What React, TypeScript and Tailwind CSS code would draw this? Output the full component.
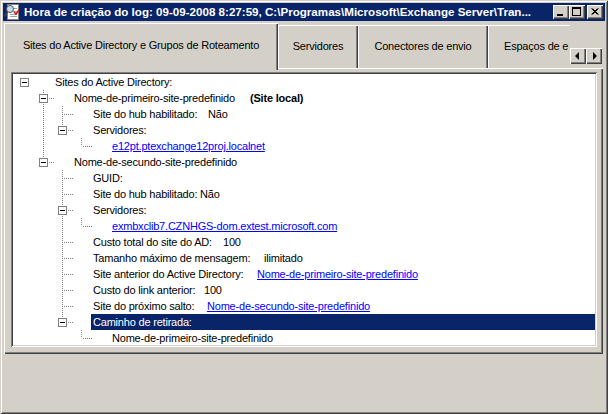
import React from 'react';

type Row = {
  depth: number;
  label: string;
  link?: boolean;
  lw?: string;
  value?: string;
  valueKind?: 'link' | 'bold' | 'text';
  selected?: boolean;
};

const TITLE =
  'Hora de criação do log: 09-09-2008 8:27:59, C:\\Programas\\Microsoft\\Exchange Server\\Tran...';

const rows: Row[] = [
  { depth: 0, label: 'Sites do Active Directory:' },
  { depth: 1, label: 'Nome-de-primeiro-site-predefinido', lw: 'w-[176px]', value: '(Site local)', valueKind: 'bold' },
  { depth: 2, label: 'Site do hub habilitado:', lw: 'w-[115px]', value: 'Não' },
  { depth: 2, label: 'Servidores:' },
  { depth: 3, label: 'e12pt.ptexchange12proj.localnet', link: true },
  { depth: 1, label: 'Nome-de-secundo-site-predefinido' },
  { depth: 2, label: 'GUID:' },
  { depth: 2, label: 'Site do hub habilitado: Não' },
  { depth: 2, label: 'Servidores:' },
  { depth: 3, label: 'exmbxclib7.CZNHGS-dom.extest.microsoft.com', link: true },
  { depth: 2, label: 'Custo total do site do AD:', lw: 'w-[130px]', value: '100' },
  { depth: 2, label: 'Tamanho máximo de mensagem:', lw: 'w-[171px]', value: 'ilimitado' },
  { depth: 2, label: 'Site anterior do Active Directory:', lw: 'w-[164px]', value: 'Nome-de-primeiro-site-predefinido', valueKind: 'link' },
  { depth: 2, label: 'Custo do link anterior:', lw: 'w-[111px]', value: '100' },
  { depth: 2, label: 'Site do próximo salto:', lw: 'w-[114px]', value: 'Nome-de-secundo-site-predefinido', valueKind: 'link' },
  { depth: 2, label: 'Caminho de retirada:', selected: true },
  { depth: 3, label: 'Nome-de-primeiro-site-predefinido' },
];

const hasNext = (i: number) => {
  const d = rows[i].depth;
  for (let j = i + 1; j < rows.length; j++) {
    if (rows[j].depth < d) return false;
    if (rows[j].depth === d) return true;
  }
  return false;
};

const hasChildren = (i: number) => i + 1 < rows.length && rows[i + 1].depth > rows[i].depth;

const ancestorAt = (i: number, level: number) => {
  for (let j = i - 1; j >= 0; j--) if (rows[j].depth === level) return j;
  return -1;
};

function TreeLines({ index }: { index: number }) {
  const d = rows[index].depth;
  const col = (c: number) => 9.5 + 19 * c;
  const dots = { stroke: '#808080', strokeWidth: 1, strokeDasharray: '1 1' };
  const parts: React.ReactNode[] = [];

  for (let a = 1; a < d; a++) {
    const anc = ancestorAt(index, a);
    if (anc >= 0 && hasNext(anc)) {
      parts.push(<line key={'a' + a} x1={col(a)} y1={0} x2={col(a)} y2={16} {...dots} />);
    }
  }
  if (d >= 1) {
    parts.push(<line key="top" x1={col(d)} y1={0} x2={col(d)} y2={8} {...dots} />);
    if (hasNext(index)) parts.push(<line key="bot" x1={col(d)} y1={8} x2={col(d)} y2={16} {...dots} />);
    parts.push(<line key="h" x1={9 + 19 * d + 2} y1={8.5} x2={9 + 19 * d + 12} y2={8.5} {...dots} />);
  }
  if (hasChildren(index)) {
    parts.push(
      <g key="box">
        <rect x={5.5 + 19 * d} y={4.5} width={8} height={8} fill="#fff" stroke="#808080" />
        <line x1={7 + 19 * d} y1={8.5} x2={12 + 19 * d} y2={8.5} stroke="#000" />
      </g>
    );
  }
  return (
    <svg width={19 * (d + 2)} height={16} className="shrink-0">
      {parts}
    </svg>
  );
}

function TitleIcon() {
  return (
    <svg width="16" height="16" viewBox="0 0 16 16" className="shrink-0">
      <rect x="3.5" y="0.5" width="11" height="15" fill="#fff" stroke="#808080" />
      <line x1="9" y1="4.5" x2="13" y2="4.5" stroke="#a0a0a0" />
      <line x1="9" y1="7.5" x2="13" y2="7.5" stroke="#a0a0a0" />
      <line x1="6" y1="10.5" x2="13" y2="10.5" stroke="#a0a0a0" />
      <line x1="6" y1="12.5" x2="13" y2="12.5" stroke="#a0a0a0" />
      <circle cx="6" cy="5" r="3.5" fill="#c8dcf0" stroke="#505050" />
      <line x1="3.5" y1="8" x2="0.5" y2="12" stroke="#404040" strokeWidth="1.6" />
      <path d="M10 8 L12 10 L15 6" fill="none" stroke="#e01010" strokeWidth="1.5" />
    </svg>
  );
}

const raised =
  'bg-[#d4d0c8] shadow-[inset_1px_1px_#ffffff,inset_-1px_-1px_#404040,inset_-2px_-2px_#808080] flex items-center justify-center';

function CaptionButtons() {
  return (
    <div className="flex items-center shrink-0">
      <div className={`w-[16px] h-[14px] ${raised}`}>
        <svg width="16" height="14">
          <rect x="4" y="9" width="6" height="2" fill="#000" />
        </svg>
      </div>
      <div className={`w-[16px] h-[14px] ${raised}`}>
        <svg width="16" height="14">
          <rect x="3.5" y="2.5" width="8" height="8" fill="none" stroke="#000" />
          <line x1="3" y1="3.5" x2="12" y2="3.5" stroke="#000" />
        </svg>
      </div>
      <div className={`w-[16px] h-[14px] ml-[2px] ${raised}`}>
        <svg width="16" height="14">
          <path d="M4.5 3.5 L10.5 9.5 M5.5 3.5 L11.5 9.5 M10.5 3.5 L4.5 9.5 M11.5 3.5 L5.5 9.5" stroke="#000" />
        </svg>
      </div>
    </div>
  );
}

const tabShadow = 'shadow-[inset_1px_1px_#ffffff,inset_-1px_0_#404040,inset_-2px_0_#808080]';

export default function App() {
  return (
    <div className="w-[608px] h-[414px] bg-[#d4d0c8] p-[3px] flex flex-col overflow-hidden text-[11px] text-black font-['Liberation_Sans',Arial,sans-serif] shadow-[inset_1px_1px_#d4d0c8,inset_-1px_-1px_#404040,inset_2px_2px_#ffffff,inset_-2px_-2px_#808080]">
      {/* title bar */}
      <div className="h-[18px] bg-[#0a246a] flex items-center pl-[1px] pr-[2px] gap-[4px] shrink-0">
        <TitleIcon />
        <div className="flex-1 min-w-0 whitespace-nowrap text-white font-bold text-[11.6px]">
          {TITLE}
        </div>
        <CaptionButtons />
      </div>

      {/* tab strip */}
      <div className="relative z-10 h-[46px] mt-[1px] flex shrink-0">
        <div className="w-[567px] h-[48px] overflow-hidden flex items-start pl-[1px] tracking-[-0.2px]">
          <div className={`w-[274px] h-[47px] mt-[1px] shrink-0 bg-[#d4d0c8] flex items-center justify-center pb-[3px] ${tabShadow}`}>
            Sites do Active Directory e Grupos de Roteamento
          </div>
          <div className={`w-[80px] h-[43px] mt-[3px] shrink-0 flex items-center justify-center ${tabShadow}`}>
            Servidores
          </div>
          <div className={`w-[130px] h-[43px] mt-[3px] shrink-0 flex items-center justify-center ${tabShadow}`}>
            Conectores de envio
          </div>
          <div className={`w-[100px] h-[43px] mt-[3px] shrink-0 flex items-center pl-[16px] whitespace-nowrap ${tabShadow}`}>
            Espaços de e
          </div>
        </div>
        <div className="flex mt-[26px] h-[16px]">
          <div className={`w-[16px] h-[16px] ${raised}`}>
            <svg width="16" height="16">
              <path d="M5 8 L9 4 L9 12 Z" fill="#000" />
            </svg>
          </div>
          <div className={`w-[16px] h-[16px] ${raised}`}>
            <svg width="16" height="16">
              <path d="M11 8 L7 4 L7 12 Z" fill="#000" />
            </svg>
          </div>
        </div>
      </div>

      {/* tab panel */}
      <div className="h-[286px] ml-[1px] mr-[2px] pt-[4px] pl-[7px] pr-[6px] pb-[7px] shrink-0 shadow-[inset_1px_1px_#ffffff,inset_-1px_-1px_#404040,inset_-2px_-2px_#808080]">
        <div className="h-full bg-white p-[2px] shadow-[inset_1px_1px_#808080,inset_-1px_-1px_#ffffff,inset_2px_2px_#404040,inset_-2px_-2px_#d4d0c8]">
          <div className="h-full overflow-hidden tracking-[-0.2px]">
            {rows.map((r, i) => (
              <div key={i} className="flex h-[16px] pl-[2px]">
                <TreeLines index={i} />
                <div
                  className={
                    r.selected
                      ? 'flex-1 flex pl-[2px] leading-[16px] whitespace-nowrap bg-[#0a246a] text-white'
                      : 'flex-1 flex pl-[2px] leading-[16px] whitespace-nowrap'
                  }
                >
                  <span className={r.link ? `${r.lw ?? ''} text-[#0000ff] underline` : `${r.lw ?? ''} shrink-0`}>
                    {r.label}
                  </span>
                  {r.value && (
                    <span
                      className={
                        r.valueKind === 'link'
                          ? 'text-[#0000ff] underline'
                          : r.valueKind === 'bold'
                          ? 'font-bold'
                          : ''
                      }
                    >
                      {r.value}
                    </span>
                  )}
                </div>
              </div>
            ))}
          </div>
        </div>
      </div>

      <div className="flex-1" />
    </div>
  );
}
